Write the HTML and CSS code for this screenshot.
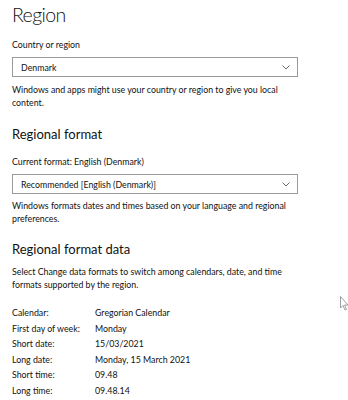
FILE: index.html
```html
<!DOCTYPE html>
<html lang="en">
<head>
    <meta charset="UTF-8">
    <meta name="viewport" content="width=device-width, initial-scale=1.0">
    <title>Region</title>
    <link rel="stylesheet" href="styles.css">
</head>
<body>
    <div class="page">
        <h1 class="title">Region</h1>

        <!-- Country or region -->
        <label class="field-label">Country or region</label>
        <div class="dropdown">
            <span>Denmark</span>
            <svg class="chevron" width="8" height="5" viewBox="0 0 8 5"><path d="M0.5 0.5 L4 4 L7.5 0.5" fill="none" stroke="#444" stroke-width="0.8"/></svg>
        </div>
        <p class="note">Windows and apps might use your country or region to give you local content.</p>

        <!-- Regional format -->
        <h2 class="section">Regional format</h2>
        <label class="field-label">Current format: English (Denmark)</label>
        <div class="dropdown">
            <span>Recommended [English (Denmark)]</span>
            <svg class="chevron" width="8" height="5" viewBox="0 0 8 5"><path d="M0.5 0.5 L4 4 L7.5 0.5" fill="none" stroke="#444" stroke-width="0.8"/></svg>
        </div>
        <p class="note tight">Windows formats dates and times based on your language and regional preferences.</p>

        <!-- Regional format data -->
        <h2 class="section data">Regional format data</h2>
        <p class="note tight sub">Select Change data formats to switch among calendars, date, and time formats supported by the region.</p>

        <div class="format-table">
            <span>Calendar:</span><span>Gregorian Calendar</span>
            <span>First day of week:</span><span>Monday</span>
            <span>Short date:</span><span>15/03/2021</span>
            <span>Long date:</span><span>Monday, 15 March 2021</span>
            <span>Short time:</span><span>09.48</span>
            <span>Long time:</span><span>09.48.14</span>
        </div>
    </div>

    <svg class="cursor" width="9" height="15" viewBox="0 0 9 15"><path d="M0.5 0.5 L0.5 12 L3 9.5 L5 14 L6.5 13.3 L4.6 9 L8 9 Z" fill="#fff" stroke="#888" stroke-width="0.8"/></svg>
</body>
</html>
```

FILE: styles.css
```css
body {
    font-family: Lato, "Open Sans", sans-serif;
    background-color: #fff;
    color: #111;
    margin: 0;
    padding: 0;
}

.page {
    width: 300px;
    padding-left: 12px;
}

.title {
    font-size: 19.5px;
    font-weight: 300;
    letter-spacing: -0.6px;
    line-height: 26px;
    margin: 2px 0 0 0;
}

.field-label {
    display: block;
    font-size: 8.8px;
    line-height: 14px;
    margin-top: 10px;
}

.dropdown {
    box-sizing: border-box;
    width: 286px;
    height: 20px;
    margin-top: 5px;
    border: 1px solid #999;
    padding: 0 7px 0 8px;
    display: flex;
    align-items: center;
    justify-content: space-between;
    font-size: 8.8px;
}

.note {
    font-size: 8.8px;
    line-height: 13px;
    margin: 6px 0 0 0;
    width: 282px;
}

.note.tight {
    line-height: 12.5px;
}

.section {
    font-size: 13px;
    font-weight: 400;
    line-height: 20px;
    margin: 15px 0 0 0;
}

.section + .field-label {
    margin-top: 11px;
}

.section.data {
    margin-top: 14px;
}

.note.sub {
    margin-top: 7px;
}

.format-table {
    display: grid;
    grid-template-columns: 83px auto;
    font-size: 8.8px;
    line-height: 15.6px;
    margin-top: 14px;
}

.cursor {
    position: absolute;
    left: 340px;
    top: 296px;
}
```
